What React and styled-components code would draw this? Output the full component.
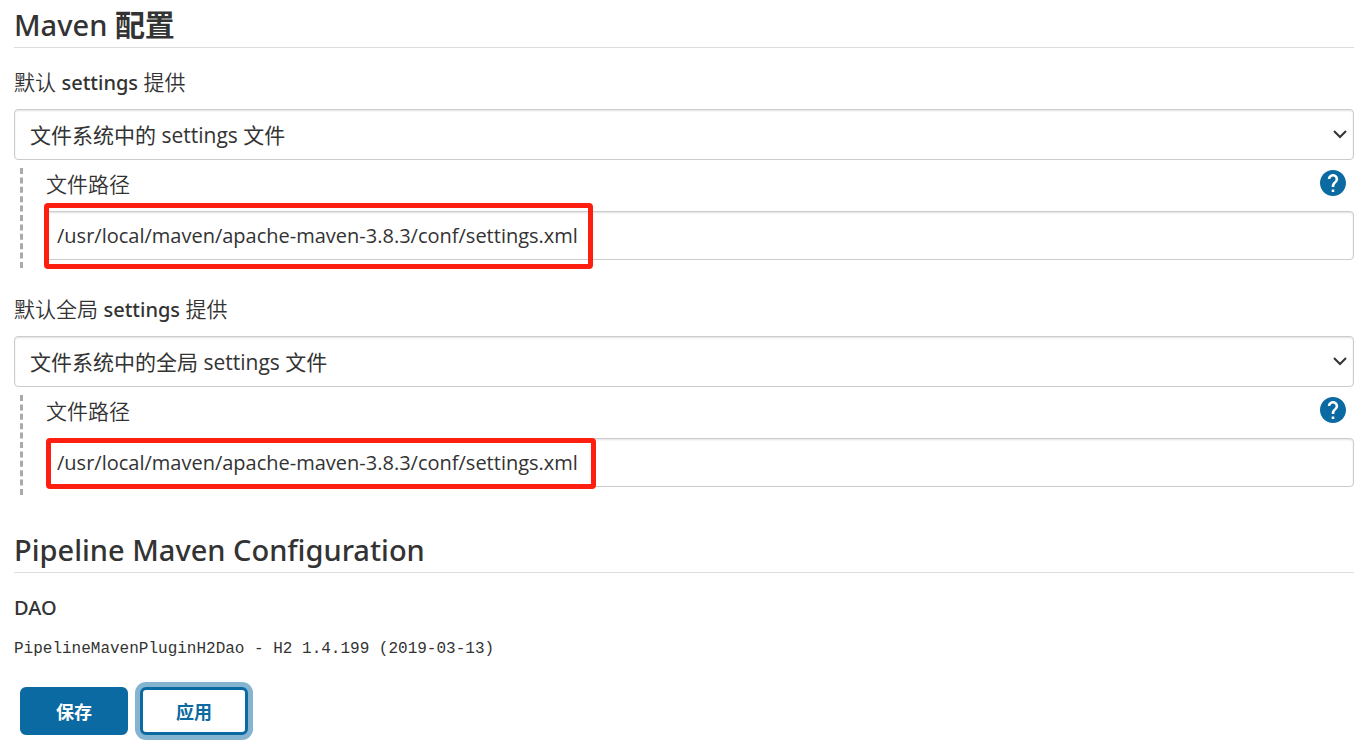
import React from "react";
import styled, { createGlobalStyle } from "styled-components";

const PATH = "/usr/local/maven/apache-maven-3.8.3/conf/settings.xml";

export default function App() {
  return (
    <Page>
      <GlobalStyle />
      <Section>
        <Heading>
          Maven <span lang="zh">配置</span>
        </Heading>
        <SettingsProvider
          id="settings"
          label={
            <>
              默认 <strong>settings</strong> 提供
            </>
          }
          option="文件系统中的 settings 文件"
          mark={{ x: -2, y: -8, width: 549, height: 66 }}
        />
        <SettingsProvider
          id="global-settings"
          label={
            <>
              默认全局 <strong>settings</strong> 提供
            </>
          }
          option="文件系统中的全局 settings 文件"
          mark={{ x: 0, y: 0, width: 550, height: 51 }}
        />
      </Section>
      <Section>
        <Heading>Pipeline Maven Configuration</Heading>
        <SubHeading>DAO</SubHeading>
        <Dao>PipelineMavenPluginH2Dao - H2 1.4.199 (2019-03-13)</Dao>
      </Section>
      <Buttons>
        <Button type="submit" $primary>
          保存
        </Button>
        <Button type="button" $focused>
          应用
        </Button>
      </Buttons>
    </Page>
  );
}

function SettingsProvider(props) {
  const { id, label, option, mark } = props;

  return (
    <Provider>
      <Label htmlFor={id}>{label}</Label>
      <SelectWrap>
        <Select id={id}>
          <option>{option}</option>
        </Select>
        <Chevron viewBox="0 0 16 16" aria-hidden="true">
          <path d="M2 4l6 6 6-6" />
        </Chevron>
      </SelectWrap>
      <Nested>
        <PathRow>
          <PathLabel htmlFor={id + "-path"}>文件路径</PathLabel>
          <HelpLink href="#help" aria-label="帮助">
            <svg viewBox="2 2 20 20" aria-hidden="true">
              <path d="M12 2C6.48 2 2 6.48 2 12s4.48 10 10 10 10-4.48 10-10S17.52 2 12 2zm1 17h-2v-2h2v2zm2.07-7.75l-.9.92C13.45 12.9 13 13.5 13 15h-2v-.5c0-1.1.45-2.1 1.17-2.83l1.24-1.26c.37-.36.59-.86.59-1.41 0-1.1-.9-2-2-2s-2 .9-2 2H8c0-2.21 1.79-4 4-4s4 1.79 4 4c0 .88-.36 1.68-.93 2.25z" />
            </svg>
          </HelpLink>
        </PathRow>
        <InputWrap>
          <Input id={id + "-path"} type="text" defaultValue={PATH} />
          <Mark $box={mark} />
        </InputWrap>
      </Nested>
    </Provider>
  );
}

const GlobalStyle = createGlobalStyle`
  * {
    box-sizing: border-box;
  }
  body {
    margin: 0;
    background: #fff;
    color: #333;
    font-family: "Open Sans", "Noto Sans CJK SC", sans-serif;
    font-size: 21px;
  }
  button, input, select {
    font: inherit;
    color: inherit;
  }
`;

const Page = styled.main`
  padding: 4px 13px 8px 14px;
`;

const Section = styled.section`
  display: flex;
  flex-direction: column;
  & + & {
    padding-top: 27px;
  }
`;

const Heading = styled.h1`
  margin: 0;
  height: 44px;
  line-height: 42px;
  border-bottom: 1px solid #ddd;
  font-family: "Noto Sans", "Noto Sans CJK SC", sans-serif;
  font-size: 29px;
  font-weight: 500;
  span {
    font-size: 30px;
    font-weight: 700;
  }
`;

const Provider = styled.div`
  padding-top: 19px;
  margin-bottom: 7px;
`;

const Label = styled.label`
  display: block;
  height: 30px;
  margin-bottom: 12px;
  line-height: 30px;
  font-weight: 350;
  strong {
    font-family: "Noto Sans", sans-serif;
    font-size: 20px;
    font-weight: 500;
  }
`;

const SelectWrap = styled.div`
  display: grid;
  grid-template-columns: 1fr 22px;
  align-items: center;
`;

const Select = styled.select`
  grid-area: 1 / 1 / 2 / 3;
  width: 100%;
  height: 51px;
  padding: 0 32px 0 15px;
  appearance: none;
  background: #fff;
  border: 1px solid #ccc;
  border-radius: 4px;
  box-shadow: inset 0 1px 2px rgba(0, 0, 0, 0.12);
`;

const Chevron = styled.svg`
  grid-area: 1 / 2 / 2 / 3;
  width: 16px;
  height: 16px;
  pointer-events: none;
  fill: none;
  stroke: #333;
  stroke-width: 2;
`;

const Nested = styled.div`
  margin: 8px 0 0 6px;
  padding: 0 0 8px 23px;
  border-left: 3px dashed #aaa;
`;

const PathRow = styled.div`
  display: flex;
  justify-content: space-between;
  height: 43px;
  padding-right: 8px;
`;

const PathLabel = styled.label`
  line-height: 32px;
  font-weight: 350;
`;

const HelpLink = styled.a`
  width: 26px;
  height: 26px;
  margin-top: 2px;
  svg {
    display: block;
    fill: #0b6aa2;
  }
`;

const InputWrap = styled.div`
  position: relative;
`;

const Input = styled.input`
  display: block;
  width: 100%;
  height: 49px;
  padding: 0 10px;
  border: 1px solid #ccc;
  border-radius: 4px;
  box-shadow: inset 0 1px 2px rgba(0, 0, 0, 0.12);
  font-size: 20px;
`;

const Mark = styled.div`
  position: absolute;
  left: ${({ $box }) => $box.x}px;
  top: ${({ $box }) => $box.y}px;
  width: ${({ $box }) => $box.width}px;
  height: ${({ $box }) => $box.height}px;
  border: 5px solid #ff1f10;
  border-radius: 4px;
  pointer-events: none;
`;

const SubHeading = styled.h2`
  margin: 20px 0 10px;
  line-height: 30px;
  font-family: "Noto Sans", "Noto Sans CJK SC", sans-serif;
  font-size: 20px;
  font-weight: 500;
`;

const Dao = styled.div`
  line-height: 32px;
  font-family: "Liberation Mono", monospace;
  font-size: 16px;
`;

const Buttons = styled.div`
  display: flex;
  gap: 12px;
  padding: 22px 6px 0;
`;

const Button = styled.button`
  width: 108px;
  height: 48px;
  padding: 0;
  border: 3px solid #0b6aa2;
  border-radius: 6px;
  background: ${({ $primary }) => ($primary ? "#0b6aa2" : "#fff")};
  box-shadow: ${({ $focused }) => ($focused ? "0 0 0 5px #85b4d0" : "none")};
  color: ${({ $primary }) => ($primary ? "#fff" : "#0b6aa2")};
  font-size: 18px;
  font-weight: 700;
`;
